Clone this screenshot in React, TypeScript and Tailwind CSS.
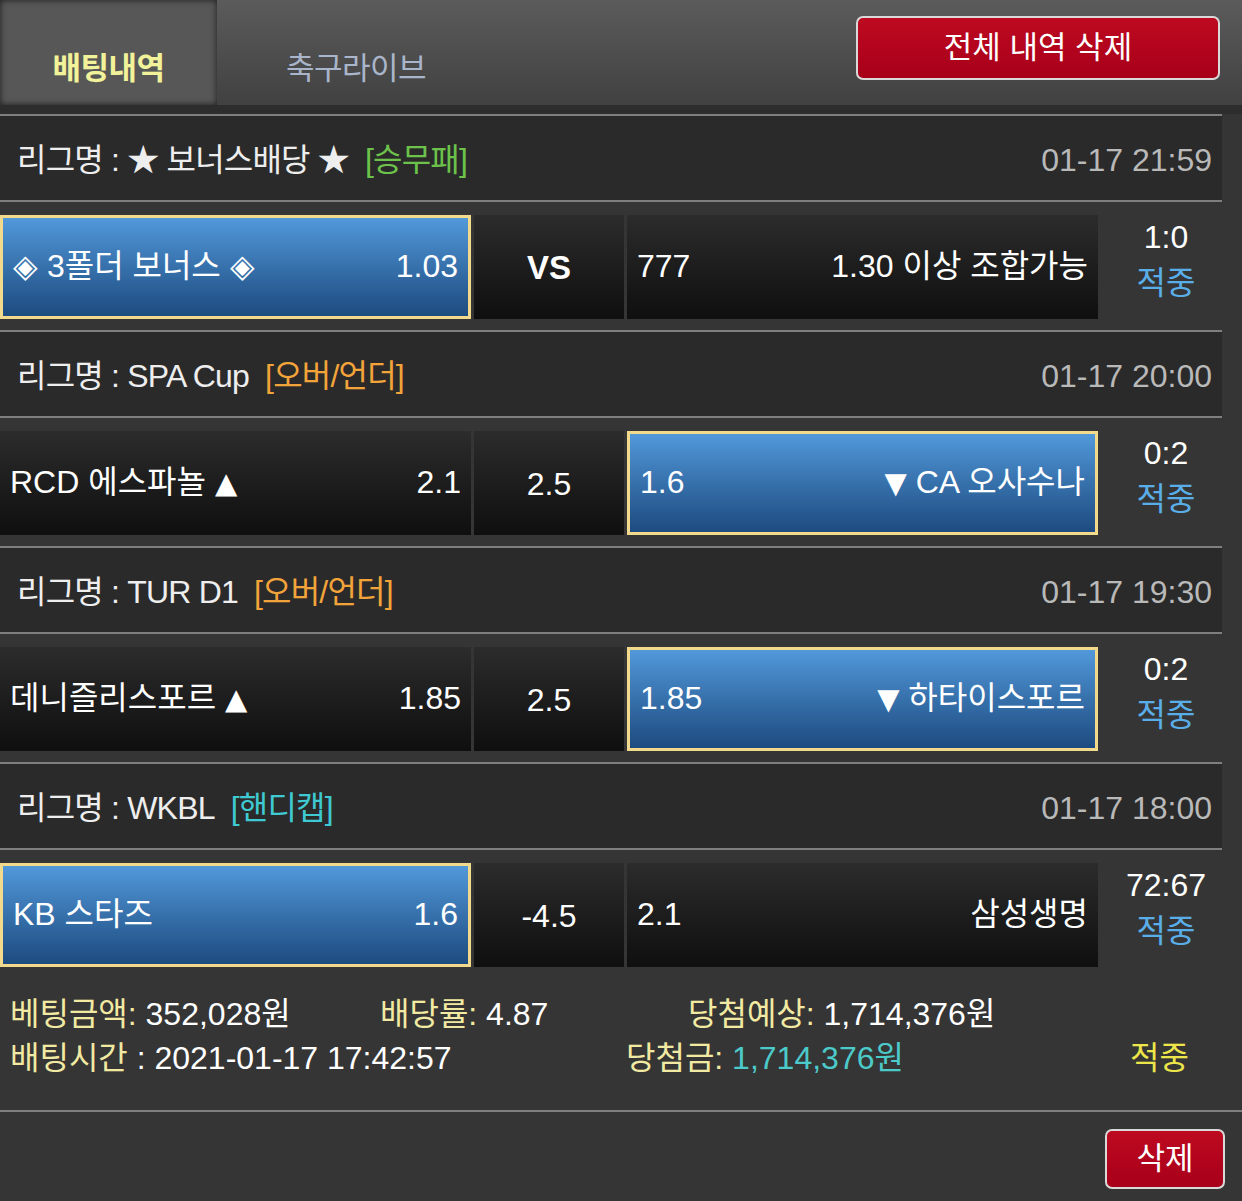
import React from "react";

type Side = { text: string; odd: string; arrow?: "up" | "down"; picked?: boolean };

type Game = {
  league: string;
  kind: string;
  kindColor: string;
  time: string;
  home: Side;
  mid: string;
  midBold?: boolean;
  away: Side;
  score: string;
};

const games: Game[] = [
  {
    league: "★ 보너스배당 ★",
    kind: "[승무패]",
    kindColor: "text-[#6cc24a]",
    time: "01-17 21:59",
    home: { text: "◈ 3폴더 보너스 ◈", odd: "1.03", picked: true },
    mid: "VS",
    midBold: true,
    away: { text: "1.30 이상 조합가능", odd: "777" },
    score: "1:0",
  },
  {
    league: "SPA Cup",
    kind: "[오버/언더]",
    kindColor: "text-[#f2a43a]",
    time: "01-17 20:00",
    home: { text: "RCD 에스파뇰", odd: "2.1", arrow: "up" },
    mid: "2.5",
    away: { text: "CA 오사수나", odd: "1.6", arrow: "down", picked: true },
    score: "0:2",
  },
  {
    league: "TUR D1",
    kind: "[오버/언더]",
    kindColor: "text-[#f2a43a]",
    time: "01-17 19:30",
    home: { text: "데니즐리스포르", odd: "1.85", arrow: "up" },
    mid: "2.5",
    away: { text: "하타이스포르", odd: "1.85", arrow: "down", picked: true },
    score: "0:2",
  },
  {
    league: "WKBL",
    kind: "[핸디캡]",
    kindColor: "text-[#3fc9d2]",
    time: "01-17 18:00",
    home: { text: "KB 스타즈", odd: "1.6", picked: true },
    mid: "-4.5",
    away: { text: "삼성생명", odd: "2.1" },
    score: "72:67",
  },
];

const cellBase = "flex items-center justify-between px-[10px] pb-[3px] text-[32px] text-white";
const darkCell = "bg-gradient-to-b from-[#2c2c2c] to-[#0f0f0f]";
const blueCell =
  "bg-gradient-to-b from-[#5299da] to-[#1d4b80] border-[3px] border-[#f2d98c]";

const Tri = ({ dir }: { dir: "up" | "down" }) => (
  <span className="font-[family-name:'DejaVu_Sans',sans-serif] text-[29px]">
    {dir === "up" ? "▲" : "▼"}
  </span>
);

const Line = () => <div className="h-[2px] w-[1222px] bg-[#7f7f7f]" />;

const Match = ({ g, last }: { g: Game; last?: boolean }) => (
  <>
    <div className="flex h-[84px] w-[1222px] items-center justify-between bg-[#2a2a2a] pl-[17px] pr-[10px] pt-[3px] text-[32px]">
      <div className="flex items-center tracking-[-0.8px] text-[#eeeeee]">
        <span>리그명 : {g.league}</span>
        <span className={`ml-[16px] ${g.kindColor}`}>{g.kind}</span>
      </div>
      <span className="text-[#b9b9b9]">{g.time}</span>
    </div>
    <Line />
    <div className="flex h-[128px] w-[1222px] pt-[13px] pb-[11px]">
      <div className={`w-[471px] ${cellBase} ${g.home.picked ? blueCell : darkCell}`}>
        <span>
          {g.home.text}
          {g.home.arrow && (
            <>
              {" "}
              <Tri dir={g.home.arrow} />
            </>
          )}
        </span>
        <span>{g.home.odd}</span>
      </div>
      <div
        className={`ml-[3px] flex w-[150px] items-center justify-center pt-[2px] text-white ${darkCell} ${
          g.midBold ? "text-[33px] font-bold" : "text-[32px]"
        }`}
      >
        {g.mid}
      </div>
      <div className={`ml-[3px] w-[471px] ${cellBase} ${g.away.picked ? blueCell : darkCell}`}>
        <span>{g.away.odd}</span>
        <span>
          {g.away.arrow && (
            <>
              <Tri dir={g.away.arrow} />{" "}
            </>
          )}
          {g.away.text}
        </span>
      </div>
      <div className="flex flex-1 flex-col items-center justify-center pb-[14px] pl-[12px] text-[32px] leading-[46px]">
        <span className="text-white">{g.score}</span>
        <span className="text-[#5aaee8]">적중</span>
      </div>
    </div>
    {!last && <Line />}
  </>
);

export default function App() {
  return (
    <div className="min-h-[1201px] w-[1242px] bg-[#353535] font-[family-name:'Liberation_Sans','Noto_Sans_CJK_KR',sans-serif]">
      <header className="flex h-[105px] items-stretch bg-gradient-to-b from-[#5b5b5b] to-[#414141]">
        <div className="flex w-[217px] items-end justify-center bg-[#575757] pb-[13px] text-[31px] font-bold tracking-[-0.5px] text-[#f2f29a] shadow-[inset_0_0_6px_rgba(0,0,0,0.7)]">
          배팅내역
        </div>
        <div className="flex w-[278px] items-end justify-center pb-[13px] text-[31px] tracking-[-0.5px] text-[#a9b5cb]">
          축구라이브
        </div>
        <div className="flex flex-1 items-start justify-end pr-[22px] pt-[16px]">
          <button className="h-[64px] w-[364px] rounded-[7px] border-2 border-[#d9d9d9] bg-gradient-to-b from-[#bd0a20] to-[#a8001a] text-[31px] text-white">
            전체 내역 삭제
          </button>
        </div>
      </header>
      <div className="h-[9px] bg-[#2d2d2d]" />
      <Line />
      {games.map((g, i) => (
        <Match key={g.time} g={g} last={i === games.length - 1} />
      ))}
      <div className="pt-[14px] pb-[30px] text-[32px] leading-[44px]">
        <div className="flex">
          <span className="w-[380px] pl-[10px] text-white">
            <span className="text-[#f2eaa2]">베팅금액:</span> 352,028원
          </span>
          <span className="w-[308px] text-white">
            <span className="text-[#f2eaa2]">배당률:</span> 4.87
          </span>
          <span className="text-white">
            <span className="text-[#f2eaa2]">당첨예상:</span> 1,714,376원
          </span>
        </div>
        <div className="flex">
          <span className="w-[626px] pl-[10px] text-white">
            <span className="text-[#f2eaa2]">배팅시간</span> : 2021-01-17 17:42:57
          </span>
          <span className="w-[504px] text-[#4ccaca]">
            <span className="text-[#f2eaa2]">당첨금:</span> 1,714,376원
          </span>
          <span className="text-[#ece64a]">적중</span>
        </div>
      </div>
      <div className="h-[2px] bg-[#7f7f7f]" />
      <div className="flex justify-end pr-[17px] pt-[17px]">
        <button className="h-[60px] w-[120px] rounded-[7px] border-2 border-[#d9d9d9] bg-gradient-to-b from-[#bd0a20] to-[#a8001a] text-[31px] text-white">
          삭제
        </button>
      </div>
    </div>
  );
}
